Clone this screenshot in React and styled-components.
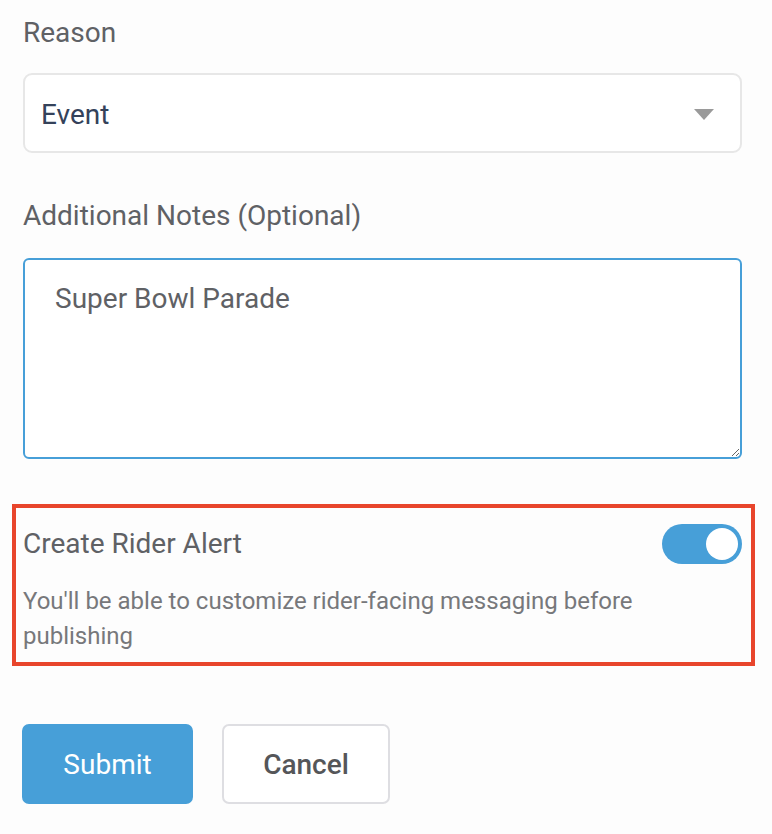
import React from "react";
import styled, { createGlobalStyle } from "styled-components";

const Global = createGlobalStyle`
  html, body { margin: 0; padding: 0; background: #fdfdfd; }
  body { font-family: Roboto, "Noto Sans", Arial, sans-serif; -webkit-font-smoothing: antialiased; }
  * { box-sizing: border-box; }
`;

const Page = styled.div`
  width: 772px;
  padding: 16px 30px 0 23px;
  display: flex;
  flex-direction: column;
`;

const Field = styled.div`
  display: flex;
  flex-direction: column;
  gap: ${(p) => p.$gap || 23}px;
  margin-bottom: ${(p) => p.$mb || 0}px;
`;

const Label = styled.label`
  font-size: 28px;
  line-height: 34px;
  color: #5f6165;
  font-weight: 400;
`;

const SelectBox = styled.div`
  height: 80px;
  width: 719px;
  border: 2px solid #e7e7e7;
  border-radius: 9px;
  background: #fff;
  display: flex;
  align-items: center;
  justify-content: space-between;
  padding: 2px 26px 0 16px;
  font-size: 28px;
  color: #34425a;
`;

const Notes = styled.textarea`
  width: 719px;
  height: 201px;
  border: 2px solid #479fd8;
  border-radius: 6px;
  padding: 22px 30px;
  font-family: Roboto, "Noto Sans", Arial, sans-serif;
  font-size: 28px;
  line-height: 34px;
  color: #5f6165;
  background: #fff;
  resize: vertical;
  outline: none;
  display: block;
`;

const AlertBox = styled.section`
  margin-left: -11px;
  width: 743px;
  border: 4px solid #e8452c;
  padding: 16px 9px 8px 7px;
  display: flex;
  flex-direction: column;
  gap: 20px;
`;

const AlertRow = styled.div`
  display: flex;
  align-items: center;
  justify-content: space-between;
`;

const AlertTitle = styled.div`
  font-size: 28px;
  line-height: 34px;
  color: #5f6165;
`;

const Hint = styled.p`
  margin: 0;
  font-size: 24px;
  line-height: 35px;
  color: #77787b;
  max-width: 640px;
`;

const Switch = styled.div`
  width: 80px;
  height: 40px;
  border-radius: 20px;
  background: ${(p) => (p.$on ? "#479fd8" : "#ccc")};
  display: flex;
  align-items: center;
  justify-content: ${(p) => (p.$on ? "flex-end" : "flex-start")};
  padding: 0 4px;
`;

const Knob = styled.span`
  width: 32px;
  height: 32px;
  border-radius: 50%;
  background: #fff;
`;

const Actions = styled.div`
  display: flex;
  gap: 29px;
  margin: 58px 0 0 -1px;
`;

const Button = styled.button`
  height: 80px;
  width: ${(p) => p.$w}px;
  border-radius: 7px;
  font-family: Roboto, "Noto Sans", Arial, sans-serif;
  font-size: 28px;
  padding: 0;
  cursor: pointer;
  background: ${(p) => (p.$primary ? "#479fd8" : "#fff")};
  color: ${(p) => (p.$primary ? "#fff" : "#555659")};
  font-weight: ${(p) => (p.$primary ? 400 : 500)};
  border: 2px solid ${(p) => (p.$primary ? "#479fd8" : "#dedee2")};
`;

export default function App() {
  return (
    <>
      <Global />
      <Page>
        <Field $mb={46}>
          <Label>Reason</Label>
          <SelectBox>
            <span>Event</span>
            <svg width="20" height="11" viewBox="0 0 20 11">
              <path d="M0 0 H20 L10 11 Z" fill="#9a9a9a" />
            </svg>
          </SelectBox>
        </Field>
        <Field $gap={25} $mb={45}>
          <Label>Additional Notes (Optional)</Label>
          <Notes defaultValue="Super Bowl Parade" />
        </Field>
        <AlertBox>
          <AlertRow>
            <AlertTitle>Create Rider Alert</AlertTitle>
            <Switch $on>
              <Knob />
            </Switch>
          </AlertRow>
          <Hint>You'll be able to customize rider-facing messaging before publishing</Hint>
        </AlertBox>
        <Actions>
          <Button $primary $w={171}>Submit</Button>
          <Button $w={168}>Cancel</Button>
        </Actions>
      </Page>
    </>
  );
}
